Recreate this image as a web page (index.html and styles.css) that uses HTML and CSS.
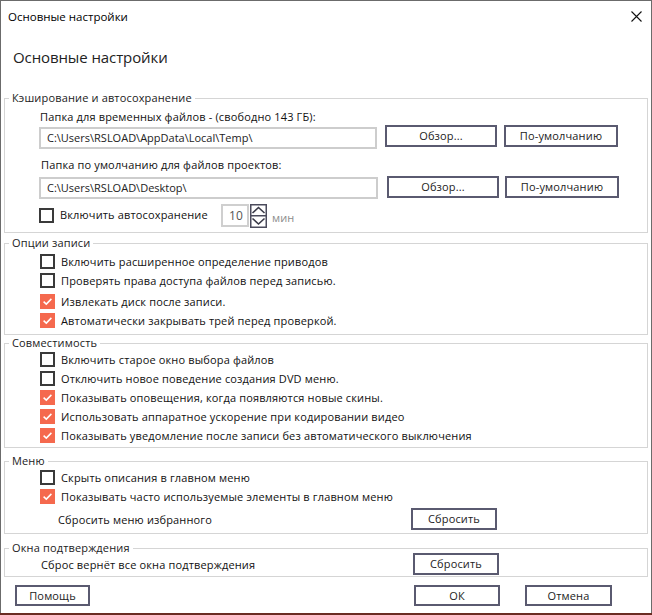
FILE: index.html
```html
<!DOCTYPE html>
<html lang="ru">
<head>
<meta charset="utf-8">
<title>Основные настройки</title>
<link rel="stylesheet" href="styles.css">
</head>
<body>
<div class="window">
  <div class="titlebar">
    <span class="title">Основные настройки</span>
    <svg class="close" width="11" height="11" viewBox="0 0 11 11"><path d="M0.5 0.5 L10.5 10.5 M10.5 0.5 L0.5 10.5" stroke="#111" stroke-width="1.1" fill="none"/></svg>
  </div>
  <div class="heading">Основные настройки</div>

  <fieldset class="group g1">
    <legend>Кэширование и автосохранение</legend>
    <div class="field-label first">Папка для временных файлов - (свободно 143 ГБ):</div>
    <div class="path-row">
      <div class="path">C:\Users\RSLOAD\AppData\Local\Temp\</div>
      <div class="btn browse">Обзор...</div>
      <div class="btn default">По-умолчанию</div>
    </div>
    <div class="field-label second">Папка по умолчанию для файлов проектов:</div>
    <div class="path-row row2">
      <div class="path">C:\Users\RSLOAD\Desktop\</div>
      <div class="btn browse">Обзор...</div>
      <div class="btn default">По-умолчанию</div>
    </div>
    <div class="autosave">
      <div class="check-wrap">
        <span class="cb"></span>
        <span class="cb-label">Включить автосохранение</span>
      </div>
      <div class="spin-input">10</div>
      <svg class="spin" width="17" height="24" viewBox="0 0 17 24">
        <rect x="0.75" y="0.75" width="15.5" height="11" fill="#fff" stroke="#4b4b5c" stroke-width="1.5"/>
        <rect x="0.75" y="11.75" width="15.5" height="11.5" fill="#fff" stroke="#4b4b5c" stroke-width="1.5"/>
        <path d="M2.5 9 L8.5 3.5 L14.5 9" fill="none" stroke="#3a3a48" stroke-width="1.6"/>
        <path d="M2.5 14.5 L8.5 20 L14.5 14.5" fill="none" stroke="#3a3a48" stroke-width="1.6"/>
      </svg>
      <span class="unit">мин</span>
    </div>
  </fieldset>

  <fieldset class="group g2">
    <legend>Опции записи</legend>
    <div class="opt"><span class="cb"></span><span class="cb-label">Включить расширенное определение приводов</span></div>
    <div class="opt"><span class="cb"></span><span class="cb-label">Проверять права доступа файлов перед записью.</span></div>
    <div class="opt gap"><span class="cb on"><svg width="15" height="15" viewBox="0 0 15 15"><path d="M3.6 7.6 L6.3 10.1 L11.4 4.9" fill="none" stroke="#fff" stroke-width="1.5"/></svg></span><span class="cb-label">Извлекать диск после записи.</span></div>
    <div class="opt"><span class="cb on"><svg width="15" height="15" viewBox="0 0 15 15"><path d="M3.6 7.6 L6.3 10.1 L11.4 4.9" fill="none" stroke="#fff" stroke-width="1.5"/></svg></span><span class="cb-label">Автоматически закрывать трей перед проверкой.</span></div>
  </fieldset>

  <fieldset class="group g3">
    <legend>Совместимость</legend>
    <div class="opt"><span class="cb"></span><span class="cb-label">Включить старое окно выбора файлов</span></div>
    <div class="opt"><span class="cb"></span><span class="cb-label">Отключить новое поведение создания DVD меню.</span></div>
    <div class="opt"><span class="cb on"><svg width="15" height="15" viewBox="0 0 15 15"><path d="M3.6 7.6 L6.3 10.1 L11.4 4.9" fill="none" stroke="#fff" stroke-width="1.5"/></svg></span><span class="cb-label">Показывать оповещения, когда появляются новые скины.</span></div>
    <div class="opt"><span class="cb on"><svg width="15" height="15" viewBox="0 0 15 15"><path d="M3.6 7.6 L6.3 10.1 L11.4 4.9" fill="none" stroke="#fff" stroke-width="1.5"/></svg></span><span class="cb-label">Использовать аппаратное ускорение при кодировании видео</span></div>
    <div class="opt"><span class="cb on"><svg width="15" height="15" viewBox="0 0 15 15"><path d="M3.6 7.6 L6.3 10.1 L11.4 4.9" fill="none" stroke="#fff" stroke-width="1.5"/></svg></span><span class="cb-label">Показывать уведомление после записи без автоматического выключения</span></div>
  </fieldset>

  <fieldset class="group g4">
    <legend>Меню</legend>
    <div class="opt"><span class="cb"></span><span class="cb-label">Скрыть описания в главном меню</span></div>
    <div class="opt"><span class="cb on"><svg width="15" height="15" viewBox="0 0 15 15"><path d="M3.6 7.6 L6.3 10.1 L11.4 4.9" fill="none" stroke="#fff" stroke-width="1.5"/></svg></span><span class="cb-label">Показывать часто используемые элементы в главном меню</span></div>
    <div class="reset-row menu-reset">
      <span class="reset-text">Сбросить меню избранного</span>
      <div class="btn reset">Сбросить</div>
    </div>
  </fieldset>

  <fieldset class="group g5">
    <legend>Окна подтверждения</legend>
    <div class="reset-row confirm-reset">
      <span class="reset-text">Сброс вернёт все окна подтверждения</span>
      <div class="btn reset">Сбросить</div>
    </div>
  </fieldset>

  <div class="footer">
    <div class="btn help">Помощь</div>
    <div class="spacer"></div>
    <div class="btn ok">ОК</div>
    <div class="btn cancel">Отмена</div>
  </div>
</div>
</body>
</html>
```

FILE: styles.css
```css
* { box-sizing: border-box; }
html, body { margin: 0; padding: 0; }
body {
  width: 652px;
  height: 615px;
  overflow: hidden;
  background: #6a2c22;
  font-family: "Open Sans", "Noto Sans", sans-serif;
  font-size: 11px;
  letter-spacing: 0.15px;
  color: #111;
}
.window {
  width: 652px;
  height: 613px;
  background: #fff;
  border: 1px solid #6b6b6b;
  border-bottom: none;
  display: flex;
  flex-direction: column;
}
.titlebar {
  height: 30px;
  flex: none;
  display: flex;
  align-items: center;
  justify-content: space-between;
  padding: 0 9px 0 7px;
}
.title { font-size: 11.5px; letter-spacing: 0; color: #000; }
.close { display: block; }
.heading {
  margin: 16px 0 0 12px;
  font-size: 15px;
  line-height: 20px;
  letter-spacing: -0.1px;
  color: #222;
}
.group {
  margin: 0 3px;
  padding: 0;
  border: 1px solid #d5d5d5;
  min-width: 0;
  flex: none;
}
.group legend {
  margin-left: 4px;
  padding: 0 3px;
  line-height: 14px;
  font-size: 11px;
  color: #222;
}
.g1 { margin-top: 24px; padding-bottom: 4px; }
.g2 { margin-top: 3px; padding-top: 2px; padding-bottom: 4px; }
.g3 { margin-top: 1px; padding-bottom: 2px; }
.g4 { margin-top: 6px; padding-bottom: 3px; }
.g5 { margin-top: 7px; padding-bottom: 1px; }

.field-label {
  line-height: 16px;
  margin-left: 35px;
}
.field-label.first { margin-top: 4px; }
.field-label.second { margin-top: 8px; margin-left: 36px; }
.path-row {
  display: flex;
  align-items: flex-start;
  margin-left: 34px;
  height: 24px;
}
.path-row.row2 { margin-top: 3px; height: 23px; }
.path {
  width: 338px;
  height: 22px;
  margin-top: 2px;
  border: 2px solid #cdcdcd;
  padding: 0 6px;
  line-height: 18px;
  color: #222;
  letter-spacing: 0;
}
.row2 .path { margin-top: 1px; width: 339px; }
.btn {
  height: 22px;
  border: 2px solid #5a5a70;
  text-align: center;
  line-height: 18px;
  color: #222;
  background: #fff;
}
.btn.browse { width: 112px; margin-left: 8px; }
.btn.default { width: 114px; margin-left: 7px; }
.row2 .btn.browse { margin-left: 9px; }
.row2 .btn.default { margin-left: 6px; }

.autosave {
  display: flex;
  align-items: flex-start;
  margin-top: 5px;
  margin-left: 34px;
  height: 24px;
}
.check-wrap {
  width: 182px;
  display: flex;
  align-items: center;
  margin-top: 3px;
}
.cb {
  width: 15px;
  height: 15px;
  flex: none;
  border: 2px solid #3a3a3a;
  background: #fff;
  display: block;
}
.cb.on {
  border: none;
  background: #f5694e;
}
.cb svg { display: block; }
.cb-label {
  margin-left: 6px;
  line-height: 16px;
  white-space: nowrap;
}
.spin-input {
  width: 28px;
  height: 23px;
  border: 2px solid #cfcfcf;
  padding-left: 6px;
  line-height: 19px;
  font-size: 12px;
  color: #555;
}
.spin { display: block; margin-left: 1px; }
.unit {
  margin-left: 5px;
  margin-top: 6px;
  line-height: 16px;
  color: #8c8c8c;
}

.opt {
  height: 19px;
  display: flex;
  align-items: center;
  margin-left: 35px;
}
.g3 .opt { height: 19px; }
.opt.gap { margin-top: 2px; }

.reset-row {
  display: flex;
  align-items: center;
  height: 22px;
}
.menu-reset { margin-top: 2px; margin-left: 53px; }
.menu-reset .reset-text { width: 353px; }
.confirm-reset { margin-top: -2px; margin-left: 36px; }
.confirm-reset .reset-text { width: 372px; }
.btn.reset { width: 86px; height: 22px; }

.footer {
  display: flex;
  margin-top: 8px;
  padding: 0 39px 0 14px;
}
.spacer { flex: 1; }
.btn.help { width: 75px; height: 21px; line-height: 17px; }
.btn.ok { width: 86px; height: 21px; line-height: 17px; }
.btn.cancel { width: 87px; height: 21px; line-height: 17px; margin-left: 25px; }
```
